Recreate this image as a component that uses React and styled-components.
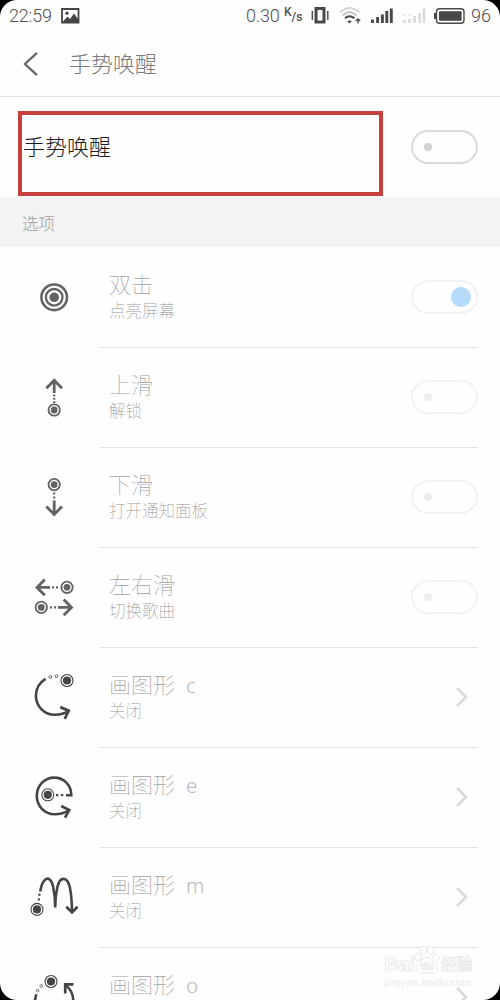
import React from "react";
import styled, { createGlobalStyle } from "styled-components";

const Global = createGlobalStyle`
  * { box-sizing: border-box; }
  body { margin: 0; background: #000; }
`;

const cjk = `"Noto Sans CJK SC", sans-serif`;

const Screen = styled.div`
  position: relative;
  width: 500px;
  height: 1000px;
  overflow: hidden;
  background: #fefefe;
  border-radius: 17px;
  font-family: ${cjk};
  font-weight: 100;
`;

const StatusBar = styled.header`
  display: flex;
  align-items: center;
  justify-content: space-between;
  height: 32px;
  padding: 0 9px;
  font-family: Roboto, "Noto Sans", sans-serif;
  font-weight: 300;
  font-size: 18px;
  color: #505050;
  svg { display: block; }
`;

const StatusGroup = styled.div`
  display: flex;
  align-items: center;
  gap: ${(p) => p.$gap}px;
`;

const StatusText = styled.span`
  width: ${(p) => p.$w}px;
  line-height: 32px;
  white-space: nowrap;
  letter-spacing: ${(p) => p.$track || 0}px;
`;

const Unit = styled.span`
  display: flex;
  width: 20px;
  height: 20px;
  margin-left: -6px;
  font-size: 12px;
  line-height: 12px;
  font-weight: 500;
  span:last-child { padding-top: 5px; }
`;

const TitleBar = styled.div`
  display: flex;
  align-items: center;
  height: 65px;
  padding-left: 20px;
  border-bottom: 1px solid #dedfe2;
`;

const PageTitle = styled.h1`
  margin: 0 0 4px 27px;
  font-size: 22px;
  line-height: 30px;
  font-weight: 300;
  color: #7c7c7c;
`;

const MasterRow = styled.section`
  display: flex;
  align-items: center;
  justify-content: space-between;
  height: 100px;
  padding: 0 22px 0 18px;
`;

const Highlight = styled.div`
  display: flex;
  align-items: center;
  width: 365px;
  height: 85px;
  margin-top: 13px;
  padding: 0 0 17px 1px;
  border: 4px solid #c8403d;
  font-size: 22px;
  font-weight: 300;
  color: #1c1c1c;
`;

const SectionLabel = styled.div`
  height: 50px;
  padding-left: 22px;
  background: #f3f3f3;
  font-size: 16.5px;
  line-height: 52px;
  font-weight: 300;
  color: #a0a0a0;
`;

const Row = styled.li`
  display: flex;
  height: 100px;
`;

const RowIcon = styled.svg`
  flex: none;
  width: 100px;
  height: 100px;
  fill: none;
  stroke: ${(p) => p.$ink};
`;

const RowBody = styled.div`
  display: flex;
  flex: 1;
  align-items: center;
  justify-content: space-between;
  margin-right: 22px;
  padding: 0 0 2px 9px;
  border-top: 1px solid ${(p) => (p.$first ? "transparent" : "#e2e2e2")};
`;

const List = styled.ul`
  list-style: none;
  margin: 0;
  padding: 0;
`;

const Name = styled.div`
  margin-top: -1px;
  font-size: 22px;
  line-height: 26px;
  height: 28px;
  color: #a0a0a0;
  font-weight: 100;
`;

const Letter = styled.span`
  margin-left: 11px;
  font-family: "Noto Sans", sans-serif;
  font-weight: 300;
  font-size: 20.5px;
  color: #b8b8b8;
`;

const Note = styled.div`
  font-size: 16.5px;
  line-height: 25px;
  color: #959595;
  font-weight: 100;
`;

const Switch = styled.span`
  display: flex;
  flex: none;
  align-items: center;
  justify-content: ${(p) => (p.$on ? "flex-end" : "flex-start")};
  width: 67px;
  height: 34px;
  padding: 0 ${(p) => (p.$on ? 5 : 11)}px;
  border: 2px solid ${(p) => (p.$faded ? "#f2f2f2" : "#dadada")};
  border-radius: 17px;
  &::before {
    content: "";
    width: ${(p) => (p.$on ? 20 : 8)}px;
    height: ${(p) => (p.$on ? 20 : 8)}px;
    border-radius: 50%;
    background: ${(p) => (p.$on ? "#b5dbfb" : p.$faded ? "#ededed" : "#d3d3d3")};
  }
`;

const Chevron = styled.svg`
  width: 16px;
  height: 22px;
  margin-right: 9px;
  fill: none;
  stroke: #dadada;
  stroke-width: 2.5;
`;

const Watermark = styled.div`
  position: absolute;
  left: 384px;
  top: 945px;
  width: 92px;
  color: #fefefe;
  font-family: "Liberation Sans", ${cjk};
  font-weight: 700;
  -webkit-text-stroke: 0.7px #e4e4e4;
`;

const Brand = styled.div`
  display: flex;
  align-items: flex-end;
  height: 31px;
  font-size: 20px;
  line-height: 23px;
  svg { margin: 0 0 1px -2px; flex: none; }
`;

const BrandCjk = styled.span`
  font-size: 15.5px;
  line-height: 23px;
`;

const Site = styled.div`
  font-size: 10.8px;
  line-height: 13px;
  font-weight: 400;
  white-space: nowrap;
  color: #ececec;
  -webkit-text-stroke: 0;
`;

function Target({ x, y, ink, thin }) {
  return (
    <>
      <circle cx={x} cy={y} r={thin ? 6 : 5.7} strokeWidth={thin ? 1.1 : 1.8} />
      <circle cx={x} cy={y} r={thin ? 4.1 : 3.4} fill={ink} stroke="none" />
    </>
  );
}

const GRAY = "#636363";
const DARK = "#454545";

const icons = {
  tap: (
    <>
      <circle cx="54.2" cy="50.3" r="12.8" strokeWidth="2.6" />
      <circle cx="54.2" cy="50.3" r="8.3" strokeWidth="2.3" />
      <circle cx="54.2" cy="50.3" r="4.8" fill={GRAY} stroke="none" />
    </>
  ),
  up: (
    <>
      <path d="M54.2 46V33M46.4 41.3L54.2 33.3L62 41.3" strokeWidth="2.8" />
      <path d="M54.2 47.6v1.8M54.2 51v1.8M54.2 54.2v1.8" strokeWidth="2.2" />
      <Target x={54.2} y={63} ink={GRAY} />
    </>
  ),
  down: (
    <>
      <Target x={54.2} y={37.6} ink={GRAY} />
      <path d="M54.2 45.6v1.8M54.2 49.6v1.8" strokeWidth="2.2" />
      <path d="M54.2 53.6V67.5M46.4 59.5L54.2 67.5L62 59.5" strokeWidth="2.8" />
    </>
  ),
  sides: (
    <>
      <path d="M50 40.4H37M44.8 32.6L37 40.4L44.8 48.2M58 60.4H71.5M63.7 52.6L71.5 60.4L63.7 68.2" strokeWidth="2.8" />
      <path d="M52 40.4h2M56 40.4h2M50 60.4h2M54 60.4h2" strokeWidth="2.2" />
      <Target x={67} y={40.3} ink={GRAY} />
      <Target x={41.3} y={60.4} ink={GRAY} />
    </>
  ),
  c: (
    <>
      <path d="M45.6 31.8C39.5 35.5 35.9 42 35.9 48.8C36 59.5 44.5 67.8 55 67.8C60 67.8 64.5 66.8 68.4 64.2" strokeWidth="2.6" />
      <path d="M60.3 60.1L68.7 63.8L64.7 72" strokeWidth="2.8" />
      <circle cx="50.3" cy="30" r="1.4" strokeWidth="0.8" />
      <circle cx="56.5" cy="29.2" r="1.4" strokeWidth="0.8" />
      <Target x={67} y={33.5} ink={DARK} thin />
    </>
  ),
  e: (
    <>
      <path d="M66 48.2H71.3C71.3 38 63.8 30.6 54.2 30.6C44.5 30.6 36.8 38.8 36.8 48.8C36.8 59 44.5 67.3 54.5 67.3C60 67.3 65 66 68.8 63.3" strokeWidth="2.6" />
      <path d="M61.2 59L69.2 63L65 70.6" strokeWidth="2.7" />
      <path d="M56 48.2h2.2M61 48.2h2.2" strokeWidth="2.2" />
      <Target x={47.8} y={47.8} ink={DARK} thin />
    </>
  ),
  m: (
    <>
      <path d="M40.2 44.5C43 29 50.5 28 53 39Q55.2 49 55.2 60.6Q55.2 49 57.4 40C60 29 67.5 29 70 41Q71.8 50 72 65" strokeWidth="2.6" />
      <path d="M66.3 59.8L72 65.3L77.6 59.8" strokeWidth="2.7" />
      <path d="M39.6 46.8l-.4 2M39 51.4l-.3 2" strokeWidth="2.2" />
      <Target x={37} y={62.4} ink={DARK} thin />
    </>
  ),
  o: (
    <>
      <path d="M36.3 47.2L34.8 54M65.8 38.5Q73 43.5 73.3 54" strokeWidth="2.6" />
      <path d="M65.2 46.5V37.4H73.5" strokeWidth="2.7" />
      <circle cx="41.3" cy="39" r="1.4" strokeWidth="0.7" />
      <circle cx="37.6" cy="43.5" r="1.4" strokeWidth="0.7" />
      <Target x={51} y={34.5} ink={DARK} thin />
    </>
  ),
};

const gestures = [
  { icon: "tap", name: "双击", note: "点亮屏幕", toggle: true, on: true },
  { icon: "up", name: "上滑", note: "解锁", toggle: true },
  { icon: "down", name: "下滑", note: "打开通知面板", toggle: true },
  { icon: "sides", name: "左右滑", note: "切换歌曲", toggle: true },
  { icon: "c", name: "画图形", letter: "c", note: "关闭" },
  { icon: "e", name: "画图形", letter: "e", note: "关闭" },
  { icon: "m", name: "画图形", letter: "m", note: "关闭" },
  { icon: "o", name: "画图形", letter: "o" },
];

function StatusIcons() {
  return (
    <svg width="118" height="20" viewBox="310 6 118 20" fill="none" stroke="#484848">
      <rect x="316" y="8.5" width="8" height="13.5" strokeWidth="3" />
      <path d="M312.3 11v9M327.8 11v9" strokeWidth="1.4" />
      <path d="M340 12.5Q349.5 3.5 359.5 12.5" stroke="#d4d4d4" strokeWidth="2" />
      <path d="M342.8 15.6Q349.5 8.5 356.6 15.6" stroke="#c0c0c0" strokeWidth="1.8" />
      <path d="M345 18.3Q349.5 14.3 354.4 18.3" strokeWidth="2" />
      <path d="M347.2 21.2Q349.5 19.6 351.8 21.2L349.5 23.6Z" fill="#484848" stroke="none" />
      <path d="M358 23.5V19M355.8 21L358 18.8L360.2 21" strokeWidth="1.3" />
      <path d="M372.5 23v-3.5M377.6 23v-6M382.4 23v-8.5M386.8 23v-12M391.3 23v-14.5" strokeWidth="2.9" />
      <path d="M404.5 23v-3M409.4 23v-4M414.6 23v-7M419.6 23v-10M424 23v-14.5" stroke="#d9d9d9" strokeWidth="2.5" />
      <path d="M403.5 15h2M408.5 15h2" stroke="#dedede" strokeWidth="1.6" />
    </svg>
  );
}

function Battery() {
  return (
    <svg width="31" height="18" viewBox="0 0 31 18" fill="none" stroke="#484848">
      <rect x="2.5" y="1.7" width="27.5" height="14.5" rx="3" strokeWidth="1.4" />
      <rect x="5" y="4.2" width="22.6" height="9.5" rx="1" fill="#484848" stroke="none" />
      <path d="M1 6v6" strokeWidth="2" />
    </svg>
  );
}

function Paw() {
  return (
    <svg width="28" height="30" viewBox="0 0 28 32" fill="#fefefe" stroke="#e6e6e6" strokeWidth="1">
      <ellipse cx="4.5" cy="12.5" rx="3.3" ry="4.2" />
      <ellipse cx="10" cy="5.5" rx="3.3" ry="4.4" />
      <ellipse cx="18" cy="5.5" rx="3.3" ry="4.4" />
      <ellipse cx="23.5" cy="14" rx="3.3" ry="4.2" />
      <path d="M14 13C8 13 9 18 4.5 21C0 25 4 30.5 8 30.3Q14 29 20 30.3C25 30.3 27 25 23 21C18.5 17.5 19 13 14 13Z" />
      <text x="14" y="27" fontSize="12" textAnchor="middle" strokeWidth="0.7">du</text>
    </svg>
  );
}

export default function App() {
  return (
    <>
      <Global />
      <Screen>
        <StatusBar>
          <StatusGroup $gap={9}>
            <StatusText $w={43} $track={-0.2}>22:59</StatusText>
            <svg width="19" height="16" viewBox="0 0 19 16">
              <path d="M1 1H17.5V14.5H1Z" fill="none" stroke="#454545" strokeWidth="1.8" />
              <circle cx="6" cy="5.2" r="1.6" fill="#454545" />
              <path d="M2 13.5L6.5 8.5L9 11L13 5.5L17 11V14H2Z" fill="#454545" />
            </svg>
          </StatusGroup>
          <StatusGroup $gap={6}>
            <StatusText $w={38} $track={-0.2}>0.30</StatusText>
            <Unit><span>K</span><span>/s</span></Unit>
            <StatusIcons />
            <Battery />
            <StatusText $w={20}>96</StatusText>
          </StatusGroup>
        </StatusBar>
        <TitleBar>
          <svg width="22" height="28" viewBox="0 0 22 28" fill="none" stroke="#686868" strokeWidth="2.3">
            <path d="M17 2.8L5 14L17 25.2" />
          </svg>
          <PageTitle>手势唤醒</PageTitle>
        </TitleBar>
        <MasterRow>
          <Highlight>手势唤醒</Highlight>
          <Switch />
        </MasterRow>
        <SectionLabel>选项</SectionLabel>
        <List>
          {gestures.map((g, i) => (
            <Row key={g.icon}>
              <RowIcon viewBox="0 0 100 100" $ink={i < 4 ? GRAY : DARK}>{icons[g.icon]}</RowIcon>
              <RowBody $first={i === 0}>
                <div>
                  <Name>{g.name}{g.letter && <Letter>{g.letter}</Letter>}</Name>
                  <Note>{g.note || "\u00a0"}</Note>
                </div>
                {g.toggle ? (
                  <Switch $faded $on={g.on} />
                ) : (
                  <Chevron viewBox="0 0 16 22"><path d="M4 2L13 11L4 20" /></Chevron>
                )}
              </RowBody>
            </Row>
          ))}
        </List>
        <Watermark>
          <Brand>Bai<Paw /><BrandCjk>经验</BrandCjk></Brand>
          <Site>jingyan.baidu.com</Site>
        </Watermark>
      </Screen>
    </>
  );
}
